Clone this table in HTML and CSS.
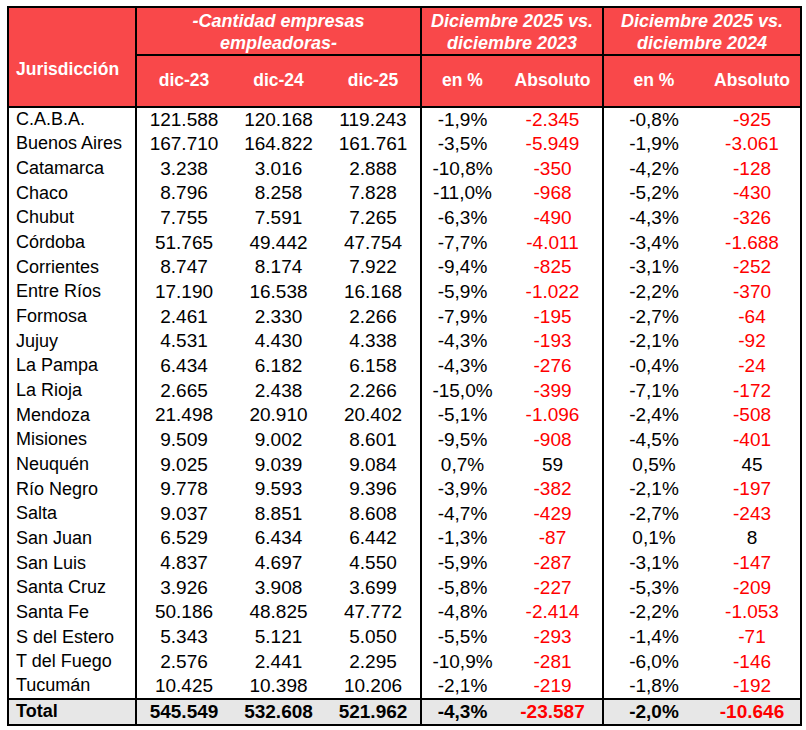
FILE: index.html
```html
<!DOCTYPE html>
<html lang="es">
<head>
<meta charset="utf-8">
<title>Empresas empleadoras por jurisdicción</title>
<link rel="stylesheet" href="styles.css">
</head>
<body>
<table class="tbl">
  <colgroup>
    <col class="c-name"><col class="c-num"><col class="c-num"><col class="c-num">
    <col class="c-p1"><col class="c-a1"><col class="c-p2"><col class="c-a2">
  </colgroup>
  <thead>
    <tr class="h1">
      <th rowspan="2" class="jur">Jurisdicción</th>
      <th colspan="3" class="grp">-Cantidad empresas<br>empleadoras-</th>
      <th colspan="2" class="grp sep">Diciembre 2025 vs.<br>diciembre 2023</th>
      <th colspan="2" class="grp sep">Diciembre 2025 vs.<br>diciembre 2024</th>
    </tr>
    <tr class="h2">
      <th>dic-23</th><th>dic-24</th><th>dic-25</th>
      <th class="sep">en %</th><th>Absoluto</th>
      <th class="sep">en %</th><th>Absoluto</th>
    </tr>
  </thead>
  <tbody>
    <tr><td class="name">C.A.B.A.</td><td>121.588</td><td>120.168</td><td>119.243</td><td class="sep">-1,9%</td><td class="neg">-2.345</td><td class="sep">-0,8%</td><td class="neg">-925</td></tr>
    <tr><td class="name">Buenos Aires</td><td>167.710</td><td>164.822</td><td>161.761</td><td class="sep">-3,5%</td><td class="neg">-5.949</td><td class="sep">-1,9%</td><td class="neg">-3.061</td></tr>
    <tr><td class="name">Catamarca</td><td>3.238</td><td>3.016</td><td>2.888</td><td class="sep">-10,8%</td><td class="neg">-350</td><td class="sep">-4,2%</td><td class="neg">-128</td></tr>
    <tr><td class="name">Chaco</td><td>8.796</td><td>8.258</td><td>7.828</td><td class="sep">-11,0%</td><td class="neg">-968</td><td class="sep">-5,2%</td><td class="neg">-430</td></tr>
    <tr><td class="name">Chubut</td><td>7.755</td><td>7.591</td><td>7.265</td><td class="sep">-6,3%</td><td class="neg">-490</td><td class="sep">-4,3%</td><td class="neg">-326</td></tr>
    <tr><td class="name">Córdoba</td><td>51.765</td><td>49.442</td><td>47.754</td><td class="sep">-7,7%</td><td class="neg">-4.011</td><td class="sep">-3,4%</td><td class="neg">-1.688</td></tr>
    <tr><td class="name">Corrientes</td><td>8.747</td><td>8.174</td><td>7.922</td><td class="sep">-9,4%</td><td class="neg">-825</td><td class="sep">-3,1%</td><td class="neg">-252</td></tr>
    <tr><td class="name">Entre Ríos</td><td>17.190</td><td>16.538</td><td>16.168</td><td class="sep">-5,9%</td><td class="neg">-1.022</td><td class="sep">-2,2%</td><td class="neg">-370</td></tr>
    <tr><td class="name">Formosa</td><td>2.461</td><td>2.330</td><td>2.266</td><td class="sep">-7,9%</td><td class="neg">-195</td><td class="sep">-2,7%</td><td class="neg">-64</td></tr>
    <tr><td class="name">Jujuy</td><td>4.531</td><td>4.430</td><td>4.338</td><td class="sep">-4,3%</td><td class="neg">-193</td><td class="sep">-2,1%</td><td class="neg">-92</td></tr>
    <tr><td class="name">La Pampa</td><td>6.434</td><td>6.182</td><td>6.158</td><td class="sep">-4,3%</td><td class="neg">-276</td><td class="sep">-0,4%</td><td class="neg">-24</td></tr>
    <tr><td class="name">La Rioja</td><td>2.665</td><td>2.438</td><td>2.266</td><td class="sep">-15,0%</td><td class="neg">-399</td><td class="sep">-7,1%</td><td class="neg">-172</td></tr>
    <tr><td class="name">Mendoza</td><td>21.498</td><td>20.910</td><td>20.402</td><td class="sep">-5,1%</td><td class="neg">-1.096</td><td class="sep">-2,4%</td><td class="neg">-508</td></tr>
    <tr><td class="name">Misiones</td><td>9.509</td><td>9.002</td><td>8.601</td><td class="sep">-9,5%</td><td class="neg">-908</td><td class="sep">-4,5%</td><td class="neg">-401</td></tr>
    <tr><td class="name">Neuquén</td><td>9.025</td><td>9.039</td><td>9.084</td><td class="sep">0,7%</td><td>59</td><td class="sep">0,5%</td><td>45</td></tr>
    <tr><td class="name">Río Negro</td><td>9.778</td><td>9.593</td><td>9.396</td><td class="sep">-3,9%</td><td class="neg">-382</td><td class="sep">-2,1%</td><td class="neg">-197</td></tr>
    <tr><td class="name">Salta</td><td>9.037</td><td>8.851</td><td>8.608</td><td class="sep">-4,7%</td><td class="neg">-429</td><td class="sep">-2,7%</td><td class="neg">-243</td></tr>
    <tr><td class="name">San Juan</td><td>6.529</td><td>6.434</td><td>6.442</td><td class="sep">-1,3%</td><td class="neg">-87</td><td class="sep">0,1%</td><td>8</td></tr>
    <tr><td class="name">San Luis</td><td>4.837</td><td>4.697</td><td>4.550</td><td class="sep">-5,9%</td><td class="neg">-287</td><td class="sep">-3,1%</td><td class="neg">-147</td></tr>
    <tr><td class="name">Santa Cruz</td><td>3.926</td><td>3.908</td><td>3.699</td><td class="sep">-5,8%</td><td class="neg">-227</td><td class="sep">-5,3%</td><td class="neg">-209</td></tr>
    <tr><td class="name">Santa Fe</td><td>50.186</td><td>48.825</td><td>47.772</td><td class="sep">-4,8%</td><td class="neg">-2.414</td><td class="sep">-2,2%</td><td class="neg">-1.053</td></tr>
    <tr><td class="name">S del Estero</td><td>5.343</td><td>5.121</td><td>5.050</td><td class="sep">-5,5%</td><td class="neg">-293</td><td class="sep">-1,4%</td><td class="neg">-71</td></tr>
    <tr><td class="name">T del Fuego</td><td>2.576</td><td>2.441</td><td>2.295</td><td class="sep">-10,9%</td><td class="neg">-281</td><td class="sep">-6,0%</td><td class="neg">-146</td></tr>
    <tr><td class="name">Tucumán</td><td>10.425</td><td>10.398</td><td>10.206</td><td class="sep">-2,1%</td><td class="neg">-219</td><td class="sep">-1,8%</td><td class="neg">-192</td></tr>
  </tbody>
  <tfoot>
    <tr class="total"><td class="name">Total</td><td>545.549</td><td>532.608</td><td>521.962</td><td class="sep">-4,3%</td><td class="neg">-23.587</td><td class="sep">-2,0%</td><td class="neg">-10.646</td></tr>
  </tfoot>
</table>
</body>
</html>
```

FILE: styles.css
```css
html, body {
  background: #ffffff;
}

body {
  margin: 0;
  padding: 6px 0 0 7px;
  font-family: "Liberation Sans", Arial, sans-serif;
  color: #000000;
}

.tbl {
  border-collapse: collapse;
  table-layout: fixed;
  border: 2px solid #000000;
}

.c-name { width: 128px; }
.c-num { width: 95px; }
.c-p1 { width: 82px; }
.c-a1 { width: 100px; }
.c-p2 { width: 101px; }
.c-a2 { width: 97px; }

.tbl th {
  background: #f9484a;
  color: #ffffff;
  font-weight: bold;
  font-size: 17.5px;
  padding: 0;
  text-align: center;
  vertical-align: middle;
}

.tbl .h1 { height: 48px; }
.tbl .h2 { height: 52px; }

.tbl th.jur {
  text-align: left;
  padding: 24px 0 0 7px;
  border-right: 2px solid #000000;
  border-bottom: 2px solid #000000;
}

.tbl th.grp {
  font-style: italic;
  font-size: 18px;
  line-height: 22px;
  padding-top: 2px;
  border-bottom: 2px solid #000000;
}

.tbl .h2 th {
  border-bottom: 2px solid #000000;
  padding-bottom: 2px;
}

.tbl .sep {
  border-left: 2px solid #000000;
}

.tbl td {
  font-size: 19px;
  padding: 0;
  text-align: center;
  vertical-align: middle;
  white-space: nowrap;
}

.tbl tbody tr { height: 24.67px; }

.tbl td.name {
  font-size: 18px;
  text-align: left;
  padding-left: 7px;
  border-right: 2px solid #000000;
}

.tbl td.neg { color: #ff0000; }

.tbl .total {
  height: 26px;
  background: #e7e7e7;
  font-weight: bold;
}

.tbl .total td {
  border-top: 2px solid #000000;
}
```
